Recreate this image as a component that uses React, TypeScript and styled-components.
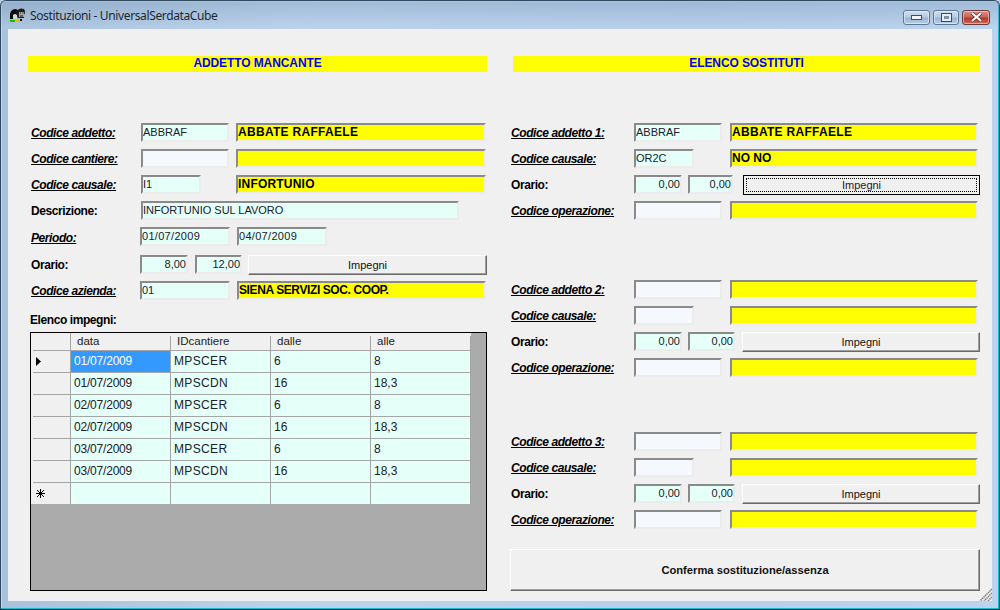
import React from "react";
import styled, { createGlobalStyle, css } from "styled-components";

const Global = createGlobalStyle`
  html, body { margin: 0; padding: 0; background: #b9d1ea; }
  #root { width: 1000px; height: 610px; overflow: hidden; }
`;

const sans = `"Liberation Sans", Arial, sans-serif`;

const Window = styled.div`
  box-sizing: border-box;
  position: relative;
  width: 1000px;
  height: 610px;
  display: flex;
  flex-direction: column;
  border: 1px solid #2f4a5e;
  border-bottom-color: #10303c;
  border-radius: 6px 6px 0 0;
  background: linear-gradient(90deg, #a8c1dc 0%, #bcd3ec 30%, #b6cfeb 70%, #bad3ef 100%);
  box-shadow: inset -1px -1px 0 #18bcd0, inset 1px 1px 0 rgba(255, 255, 255, 0.35);
`;

const TitleBar = styled.div`
  height: 27px;
  display: flex;
  align-items: center;
  padding: 0 9px 1px 8px;
  flex: none;
  background: linear-gradient(180deg, rgba(110,140,172,.35), rgba(190,214,238,.2));
`;

const TitleIcon = styled.svg`
  width: 17px;
  height: 16px;
  margin-right: 4px;
  flex: none;
`;

const TitleText = styled.div`
  flex: 1;
  font: 12px "Noto Sans", "Open Sans", sans-serif;
  letter-spacing: -0.37px;
  color: #1c2733;
  padding-top: 1px;
`;

const Caps = styled.div`
  display: flex;
  gap: 3px;
  margin-top: 5px;
`;

const Cap = styled.div<{ $close?: boolean; $w: number }>`
  box-sizing: border-box;
  width: ${(p) => p.$w}px;
  height: 15px;
  display: flex;
  align-items: center;
  justify-content: center;
  border: 1px solid ${(p) => (p.$close ? "#6e3a3a" : "#5e7690")};
  border-radius: 3px;
  box-shadow: inset 0 0 0 1px rgba(255, 255, 255, 0.45);
  background: ${(p) =>
    p.$close
      ? "linear-gradient(180deg,#d9918a 0%,#c9655c 45%,#b5362c 55%,#cc6a5c 100%)"
      : "linear-gradient(180deg,#cfdeee 0%,#b5cce4 45%,#9ab6d3 55%,#b8d0e8 100%)"};
`;

const Client = styled.div`
  position: relative;
  box-sizing: border-box;
  flex: 1;
  margin: 0 7px 8px 7px;
  padding: 27px 12px 0 20px;
  background: #f0f0f0;
  display: flex;
  gap: 23px;
  font-family: ${sans};
`;

const Column = styled.div<{ $w: number }>`
  width: ${(p) => p.$w}px;
  flex: none;
`;

const Banner = styled.div<{ $inset?: number }>`
  height: 16px;
  margin-left: ${(p) => p.$inset ?? 0}px;
  margin-bottom: 51px;
  background: #ffff00;
  color: #0000ff;
  font: bold 12px/15px ${sans};
  letter-spacing: -0.1px;
  text-align: center;
`;

const Row = styled.div<{ $h?: number }>`
  display: flex;
  height: ${(p) => p.$h ?? 26}px;
  align-items: flex-start;
`;

const Label = styled.div<{ $w: number; $link?: boolean; $x?: number; $y?: number }>`
  box-sizing: border-box;
  width: ${(p) => p.$w}px;
  flex: none;
  padding-left: ${(p) => p.$x ?? 3}px;
  padding-top: ${(p) => p.$y ?? 3}px;
  font: bold 12px/15px ${sans};
  letter-spacing: -0.42px;
  color: #000;
  white-space: nowrap;
  ${(p) =>
    p.$link &&
    css`
      font-style: italic;
      text-decoration: underline;
    `}
`;

const tones = { cyan: "#e5fff9", ghost: "#f5f8fd", yellow: "#ffff00" };

const Field = styled.div<{
  $w: number;
  $tone?: keyof typeof tones;
  $gap?: number;
  $right?: boolean;
  $bold?: boolean;
  $track?: number;
}>`
  box-sizing: border-box;
  width: ${(p) => p.$w}px;
  height: 19px;
  margin-left: ${(p) => p.$gap ?? 0}px;
  flex: none;
  padding: 0 ${(p) => (p.$right ? 0 : 1)}px 0 0;
  background: ${(p) => tones[p.$tone ?? "cyan"]};
  border: 2px solid #ececec;
  border-top-color: #8a8a8a;
  border-left-color: #8a8a8a;
  color: ${(p) => (p.$bold ? "#000" : "#20202a")};
  font: ${(p) => (p.$bold ? "bold 12px" : "11px")}/14px ${sans};
  letter-spacing: ${(p) => p.$track ?? 0}px;
  text-align: ${(p) => (p.$right ? "right" : "left")};
  white-space: nowrap;
  overflow: hidden;
`;

const Button = styled.div<{ $focus?: boolean; $gap?: number; $w?: number; $h?: number; $bold?: boolean }>`
  box-sizing: border-box;
  width: ${(p) => (p.$w ? `${p.$w}px` : "auto")};
  height: ${(p) => p.$h ?? 20}px;
  margin-left: ${(p) => p.$gap ?? 0}px;
  flex: none;
  display: flex;
  align-items: center;
  justify-content: center;
  background: #f0f0f0;
  color: ${(p) => (p.$focus ? "#2a1030" : "#111")};
  font: ${(p) => (p.$bold ? "bold 11.2px" : "11px")} ${sans};
  ${(p) =>
    p.$focus
      ? css`
          border: 1px solid #000;
          outline: 1px dotted #000;
          outline-offset: -4px;
        `
      : css`
          border: 1px solid;
          border-color: #ffffff #696969 #696969 #ffffff;
          box-shadow: inset -1px -1px 0 #a0a0a0;
        `}
`;

const GridBox = styled.div`
  box-sizing: border-box;
  width: 457px;
  height: 259px;
  margin: 0 0 0 2px;
  border: 1px solid #000;
  background: #ababab;
`;

const GridRow = styled.div<{ $h: number }>`
  display: grid;
  grid-template-columns: 40px repeat(4, 100px);
  height: ${(p) => p.$h}px;
`;

const HeadCell = styled.div<{ $corner?: boolean }>`
  box-sizing: border-box;
  background: ${(p) =>
    p.$corner
      ? "linear-gradient(#a5a5a5,#a5a5a5) right/1px 100% no-repeat #f0f0f0"
      : "linear-gradient(#a5a5a5,#a5a5a5) right 3px/1px 100% no-repeat #f0f0f0"};
  padding: 1px 0 0 6px;
  font: 11.5px/15px ${sans};
  color: #222;
`;

const RowHead = styled.div`
  box-sizing: border-box;
  background: linear-gradient(#a5a5a5, #a5a5a5) 2px 0/100% 1px no-repeat #f0f0f0;
  border-right: 1px solid #a5a5a5;
  display: flex;
  align-items: center;
  padding-left: 5px;
`;

const Cell = styled.div<{ $selected?: boolean; $track: number }>`
  box-sizing: border-box;
  background: ${(p) => (p.$selected ? "#3399ff" : "#e5fff9")};
  color: ${(p) => (p.$selected ? "#fff" : "#20202a")};
  border-top: 1px solid #a5a5a5;
  border-right: 1px solid #a5a5a5;
  padding: 3px 0 0 3px;
  font: 12px/15px ${sans};
  letter-spacing: ${(p) => p.$track}px;
`;

const Group = styled.div<{ $mb?: number }>`
  margin-bottom: ${(p) => p.$mb ?? 0}px;
`;

const Grip = styled.svg`
  position: absolute;
  right: 0;
  bottom: 0;
  width: 13px;
  height: 13px;
`;

const rows = [
  ["01/07/2009", "MPSCER", "6", "8"],
  ["01/07/2009", "MPSCDN", "16", "18,3"],
  ["02/07/2009", "MPSCER", "6", "8"],
  ["02/07/2009", "MPSCDN", "16", "18,3"],
  ["03/07/2009", "MPSCER", "6", "8"],
  ["03/07/2009", "MPSCDN", "16", "18,3"],
  ["", "", "", ""],
];

const columnTrack = [-0.2, 0.35, 0, 0];

const SubGroup = ({
  n,
  name,
  cause,
  codeTone,
  causeTone,
  nameTxt,
  causeTxt,
  focus,
  mb,
}: {
  n: number;
  name?: string;
  cause?: string;
  codeTone: "cyan" | "ghost";
  causeTone: "cyan" | "ghost";
  nameTxt?: string;
  causeTxt?: string;
  focus?: boolean;
  mb?: number;
}) => (
  <Group $mb={mb}>
    <Row>
      <Label $w={124} $x={1} $link>{`Codice addetto ${n}:`}</Label>
      <Field $w={88} $tone={codeTone}>{name}</Field>
      <Field $w={248} $gap={8} $tone="yellow" $bold $track={0.3}>{nameTxt}</Field>
    </Row>
    <Row>
      <Label $w={124} $x={1} $link>Codice causale:</Label>
      <Field $w={60} $tone={causeTone}>{cause}</Field>
      <Field $w={248} $gap={36} $tone="yellow" $bold>{causeTxt}</Field>
    </Row>
    <Row>
      <Label $w={124} $x={1}>Orario:</Label>
      <Field $w={48} $right>0,00</Field>
      <Field $w={focus ? 45 : 47} $gap={6} $right>0,00</Field>
      <Button $w={focus ? 237 : 238} $gap={focus ? 10 : 7} $focus={focus}>Impegni</Button>
    </Row>
    <Row>
      <Label $w={124} $x={1} $link>Codice operazione:</Label>
      <Field $w={88} $tone="ghost" />
      <Field $w={248} $gap={8} $tone="yellow" />
    </Row>
  </Group>
);

export default function App() {
  return (
    <>
      <Global />
      <Window>
        <TitleBar>
          <TitleIcon viewBox="0 0 17 16">
            <path d="M1 12 L1 7 Q2 2 7 2 Q10 3 9 7 L8 12 Z" fill="#0a0a0a" />
            <path d="M4 8 Q6 6 8 8 L8 12 L4 12 Z" fill="#d8d8d0" />
            <path d="M7 5 Q10 0 15 2 Q17 5 15 8 L15 11 L9 11 Z" fill="#1d1d1d" />
            <path d="M10 5 L15 5 L15 10 L10 10 Z" fill="#a9a9a4" />
            <path d="M11 6h1M13.5 6h1M11 9h3" stroke="#111" strokeWidth="1" />
            <path d="M1 14h5" stroke="#12c012" strokeWidth="2" />
            <path d="M6 13.5h5" stroke="#e2c400" strokeWidth="2" />
            <path d="M11 13h2" stroke="#111" strokeWidth="2" />
          </TitleIcon>
          <TitleText>Sostituzioni - UniversalSerdataCube</TitleText>
          <Caps>
            <Cap $w={27}>
              <svg width="11" height="5" viewBox="0 0 11 5">
                <rect x="0.5" y="0.5" width="10" height="4" fill="#f1f3f6" stroke="#3b4c60" />
              </svg>
            </Cap>
            <Cap $w={26}>
              <svg width="11" height="9" viewBox="0 0 11 9">
                <rect x="0.5" y="0.5" width="10" height="8" fill="#e6edf5" stroke="#3b4c60" />
                <rect x="3" y="3" width="5" height="3" fill="#7d93aa" />
              </svg>
            </Cap>
            <Cap $w={28} $close>
              <svg width="13" height="10" viewBox="0 0 13 10">
                <path d="M2 1 L11 9 M11 1 L2 9" stroke="#4b2020" strokeWidth="3.4" />
                <path d="M2 1 L11 9 M11 1 L2 9" stroke="#fff" strokeWidth="2.2" />
              </svg>
            </Cap>
          </Caps>
        </TitleBar>
        <Client>
          <Column $w={459}>
            <Banner>ADDETTO MANCANTE</Banner>
            <Row>
              <Label $w={113} $link>Codice addetto:</Label>
              <Field $w={88}>ABBRAF</Field>
              <Field $w={250} $gap={7} $tone="yellow" $bold $track={0.3}>ABBATE RAFFAELE</Field>
            </Row>
            <Row>
              <Label $w={113} $link>Codice cantiere:</Label>
              <Field $w={88} $tone="ghost" />
              <Field $w={250} $gap={7} $tone="yellow" />
            </Row>
            <Row>
              <Label $w={113} $link>Codice causale:</Label>
              <Field $w={60}>I1</Field>
              <Field $w={250} $gap={35} $tone="yellow" $bold $track={0.2}>INFORTUNIO</Field>
            </Row>
            <Row>
              <Label $w={113}>Descrizione:</Label>
              <Field $w={318}>INFORTUNIO SUL LAVORO</Field>
            </Row>
            <Row $h={28}>
              <Label $w={112} $link $y={4}>Periodo:</Label>
              <Field $w={90} $track={0.3}>01/07/2009</Field>
              <Field $w={90} $gap={7} $track={0.3}>04/07/2009</Field>
            </Row>
            <Row>
              <Label $w={112}>Orario:</Label>
              <Field $w={48} $right>8,00</Field>
              <Field $w={47} $gap={7} $right>12,00</Field>
              <Button $w={239} $gap={6}>Impegni</Button>
            </Row>
            <Row $h={29}>
              <Label $w={112} $link>Codice azienda:</Label>
              <Field $w={90}>01</Field>
              <Field $w={249} $gap={7} $tone="yellow" $bold $track={-0.4}>SIENA SERVIZI SOC. COOP.</Field>
            </Row>
            <Row $h={22}>
              <Label $w={113} $x={2}>Elenco impegni:</Label>
            </Row>
            <GridBox>
              <GridRow $h={17}>
                <HeadCell $corner />
                <HeadCell>data</HeadCell>
                <HeadCell>IDcantiere</HeadCell>
                <HeadCell>dalle</HeadCell>
                <HeadCell>alle</HeadCell>
              </GridRow>
              {rows.map((r, i) => (
                <GridRow $h={22} key={i}>
                  <RowHead>
                    {i === 0 && (
                      <svg width="5" height="9" viewBox="0 0 5 9">
                        <path d="M0 0 L5 4.5 L0 9 Z" fill="#000" />
                      </svg>
                    )}
                    {i === 6 && (
                      <svg width="9" height="9" viewBox="0 0 9 9">
                        <path d="M4.5 0V9M0 4.5H9M1 1L8 8M8 1L1 8" stroke="#000" strokeWidth="1" />
                      </svg>
                    )}
                  </RowHead>
                  {r.map((c, j) => (
                    <Cell key={j} $track={columnTrack[j]} $selected={i === 0 && j === 0}>{c}</Cell>
                  ))}
                </GridRow>
              ))}
            </GridBox>
          </Column>
          <Column $w={470}>
            <Banner $inset={3}>ELENCO SOSTITUTI</Banner>
            <SubGroup n={1} name="ABBRAF" cause="OR2C" codeTone="cyan" causeTone="cyan" nameTxt="ABBATE RAFFAELE" causeTxt="NO NO" focus mb={53} />
            <SubGroup n={2} codeTone="ghost" causeTone="ghost" mb={48} />
            <SubGroup n={3} codeTone="ghost" causeTone="ghost" mb={13} />
            <Button $w={470} $h={42} $bold>Conferma sostituzione/assenza</Button>
          </Column>
          <Grip viewBox="0 0 13 13">
            <path d="M13 1 L1 13 M13 5 L5 13 M13 9 L9 13" stroke="#7c7c7c" strokeWidth="1.6" strokeDasharray="1.4 0.7" />
          </Grip>
        </Client>
      </Window>
    </>
  );
}
